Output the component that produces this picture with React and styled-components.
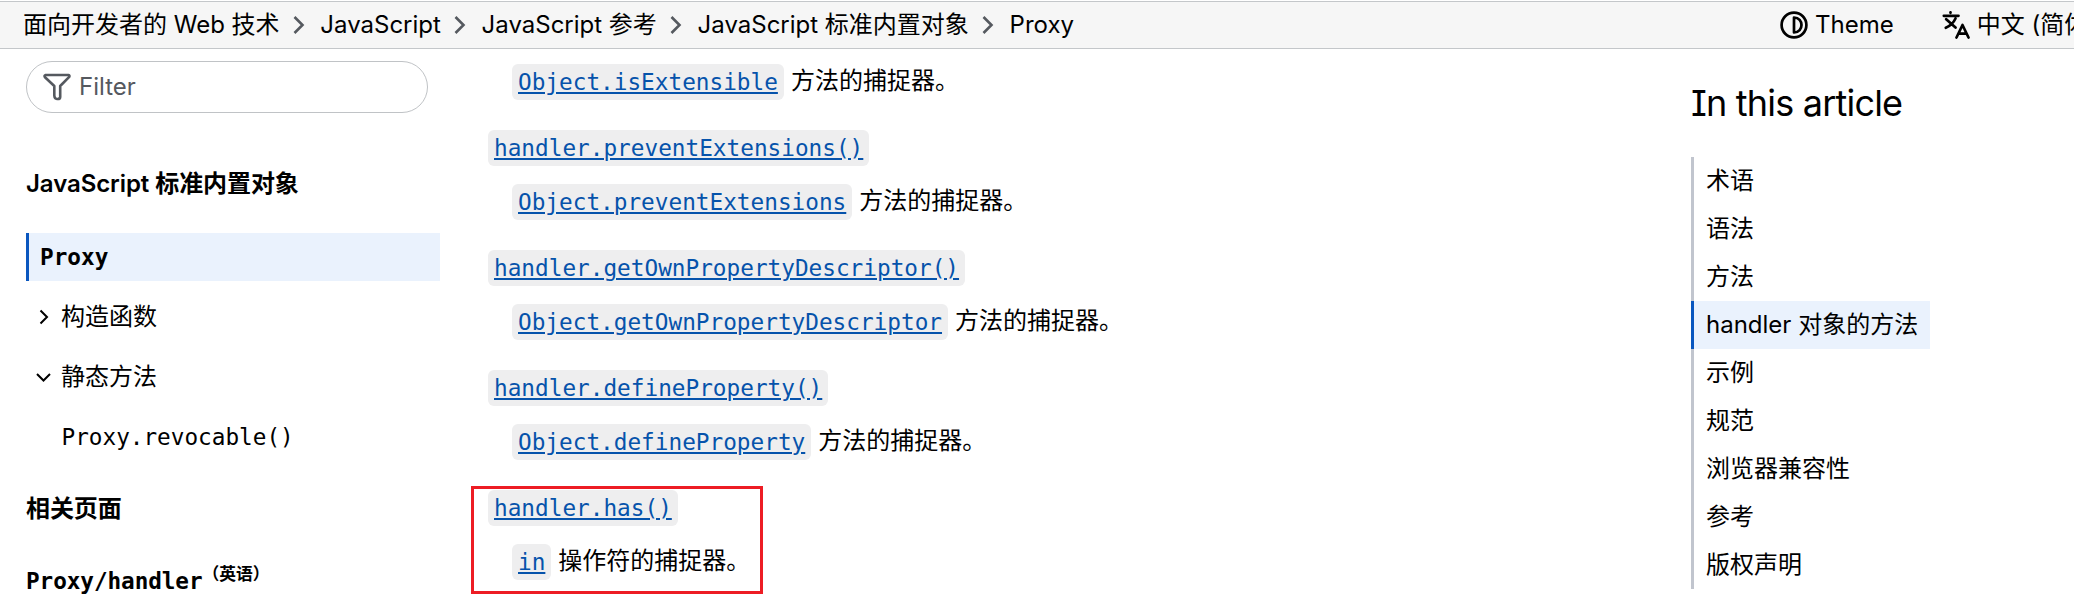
import React from "react";
import styled, { createGlobalStyle, css } from "styled-components";

const sans = `Inter, "Noto Sans CJK SC", sans-serif`;
const mono = `"DejaVu Sans Mono", "Noto Sans CJK SC", monospace`;

const GlobalStyle = createGlobalStyle`
  * { box-sizing: border-box; }
  body {
    margin: 0;
    background: #fff;
    color: #000;
    font: 400 24px/36px ${sans};
  }
  ul, ol, dl, dd, h2 { margin: 0; padding: 0; list-style: none; }
  a { color: inherit; text-decoration: none; }
`;

const Page = styled.div`
  display: flex;
  flex-direction: column;
  height: 601px;
  overflow: hidden;
`;

const TopBar = styled.header`
  display: flex;
  flex: none;
  align-items: center;
  justify-content: space-between;
  height: 48px;
  margin-top: 1px;
  padding-left: 23px;
  background: #f6f6f6;
  border-top: 1px solid #c4c7ca;
  border-bottom: 1px solid #c4c7ca;
  white-space: nowrap;
`;

const Breadcrumbs = styled.ol`
  display: flex;
  align-items: center;
`;

const Crumb = styled.li`
  display: flex;
  align-items: center;
  svg { margin: 0 15.2px 0 13.5px; color: #55595f; }
`;

const Tools = styled.div`
  display: flex;
  flex: none;
  gap: 48px;
  width: 294px;
`;

const Tool = styled.button`
  display: flex;
  flex: none;
  align-items: center;
  gap: 7px;
  padding: 0;
  border: 0;
  background: none;
  color: inherit;
  font: inherit;
`;

const Columns = styled.div`
  display: grid;
  grid-template-columns: 414px 1155px 1fr;
  column-gap: 48px;
  flex: 1;
  min-height: 0;
  padding-left: 26px;
`;

const Sidebar = styled.nav`
  padding-top: 12px;
`;

const FilterBox = styled.label`
  display: flex;
  align-items: center;
  gap: 8px;
  width: 402px;
  height: 52px;
  margin-bottom: 47px;
  padding-left: 16px;
  border: 1px solid #c0c3c6;
  border-radius: 26px;
  color: #55595f;
`;

const SideItem = styled.li`
  display: flex;
  align-items: center;
  height: 48px;
  margin-bottom: ${(p) => p.$gap || 12}px;
  padding-left: ${(p) => p.$indent || 0}px;
  font-weight: ${(p) => (p.$strong ? 600 : 400)};
  letter-spacing: ${(p) => (p.$strong ? "-0.08px" : "normal")};
  white-space: nowrap;
  ${(p) =>
    p.$current &&
    css`
      background: #eaf2fd;
      border-left: 3px solid #0a57bf;
    `}
  svg { margin: 0 8px 0 7px; }
`;

const Mono = styled.code`
  font-family: ${mono};
  font-size: 22.7px;
  font-weight: ${(p) => (p.$bold ? 700 : 400)};
`;

const LocaleNote = styled.sup`
  align-self: flex-start;
  font-size: 16.8px;
  line-height: 35px;
`;

const Article = styled.main`
  position: relative;
  padding-top: 15px;
`;

const Term = styled.dt`
  display: flex;
  height: 36px;
  margin: 30px 0 18px;
`;

const Detail = styled.dd`
  display: flex;
  gap: 7px;
  height: 36px;
  padding-left: 24px;
  white-space: nowrap;
`;

const CodeLink = styled.a`
  display: block;
  height: 36px;
  padding: 0 6px;
  border-radius: 6px;
  background: #eeeeef;
  color: #0653ab;
  font: 400 22.72px/36px ${mono};
  text-decoration: underline 2px;
  text-underline-offset: 2px;
`;

const Text = styled.span`
  line-height: 34px;
`;

const Highlight = styled.div`
  position: absolute;
  top: 437px;
  left: -17px;
  width: 292px;
  height: 108px;
  border: 3px solid #ed1c24;
`;

const Toc = styled.aside`
  padding-top: 31px;
`;

const TocTitle = styled.h2`
  height: 46px;
  margin-bottom: 31px;
  font-size: 36px;
  font-weight: 400;
  line-height: 46px;
  letter-spacing: -0.8px;
  font-feature-settings: "cv08";
  white-space: nowrap;
`;

const TocItem = styled.li`
  width: 239px;
  height: 48px;
  padding-left: 12px;
  border-left: 3px solid ${(p) => (p.$active ? "#0a57bf" : "#c1c5ce")};
  background: ${(p) => (p.$active ? "#eaf2fd" : "transparent")};
  line-height: 47px;
  white-space: nowrap;
`;

const FunnelIcon = () => (
  <svg width="28" height="28" viewBox="0 0 28 28" fill="none" stroke="currentColor" strokeWidth="2.6" strokeLinejoin="round">
    <path d="M2.6 2H25.4Q27.200 2.400 26 4.200L17.200 13V24Q17 26 14.800 26H14Q11.500 25.800 11.300 22.500V13L2 4.200Q0.800 2.500 2.600 2Z" />
  </svg>
);

const ThemeIcon = () => (
  <svg width="28" height="28" viewBox="0 0 28 28" fill="none" stroke="currentColor" strokeWidth="2.7" strokeLinejoin="round">
    <circle cx="14" cy="14" r="12.4" />
    <path d="M14 6.500c10 0 10 15 0 15Z" />
  </svg>
);

const LanguageIcon = () => (
  <svg width="28" height="28" viewBox="0 0 28 28" fill="none" stroke="currentColor" strokeWidth="2.7" strokeLinecap="round" strokeLinejoin="round">
    <path d="M1.800 4.800H16.500M8.500 1.300V1.800M4.200 8.200L13.500 16.500M13.500 7.500Q10.500 14 3.800 16.800M14.500 26.500L20.500 14L26.500 26.500M16.500 22.600H24.500" />
  </svg>
);

const CrumbChevron = () => (
  <svg width="12" height="20" viewBox="0 0 12 20" fill="none" stroke="currentColor" strokeWidth="2.6">
    <path d="M1.500 2L9.500 10L1.500 18" />
  </svg>
);

const Caret = ({ open }) => (
  <svg width="20" height="20" viewBox="0 0 20 20" fill="none" stroke="currentColor" strokeWidth="2">
    <path d={open ? "M4 7L10.500 13.500L17 7" : "M7.500 3.500L14 10L7.500 16.500"} />
  </svg>
);

const crumbs = ["面向开发者的 Web 技术", "JavaScript", "JavaScript 参考", "JavaScript 标准内置对象", "Proxy"];

const traps = [
  [null, "Object.isExtensible", "方法的捕捉器。"],
  ["handler.preventExtensions()", "Object.preventExtensions", "方法的捕捉器。"],
  ["handler.getOwnPropertyDescriptor()", "Object.getOwnPropertyDescriptor", "方法的捕捉器。"],
  ["handler.defineProperty()", "Object.defineProperty", "方法的捕捉器。"],
  ["handler.has()", "in", "操作符的捕捉器。"],
];

const sections = ["术语", "语法", "方法", "handler 对象的方法", "示例", "规范", "浏览器兼容性", "参考", "版权声明"];

export default function App() {
  return (
    <Page>
      <GlobalStyle />
      <TopBar>
        <Breadcrumbs>
          {crumbs.map((c, i) => (
            <Crumb key={c}>
              {i > 0 && <CrumbChevron />}
              <a href="#">{c}</a>
            </Crumb>
          ))}
        </Breadcrumbs>
        <Tools>
          <Tool><ThemeIcon />Theme</Tool>
          <Tool><LanguageIcon />中文 (简体)</Tool>
        </Tools>
      </TopBar>
      <Columns>
        <Sidebar>
          <FilterBox><FunnelIcon />Filter</FilterBox>
          <ul>
            <SideItem $strong $gap={25}>JavaScript 标准内置对象</SideItem>
            <SideItem $current $indent={11}><Mono $bold>Proxy</Mono></SideItem>
            <SideItem><Caret />构造函数</SideItem>
            <SideItem><Caret open />静态方法</SideItem>
            <SideItem $indent={35.5} $gap={24}><Mono>Proxy.revocable()</Mono></SideItem>
            <SideItem $strong $gap={24}>相关页面</SideItem>
            <SideItem $strong><Mono $bold>Proxy/handler</Mono><LocaleNote>（英语）</LocaleNote></SideItem>
          </ul>
        </Sidebar>
        <Article>
          <dl>
            {traps.map(([term, target, text]) => (
              <React.Fragment key={target}>
                {term && <Term><CodeLink href="#">{term}</CodeLink></Term>}
                <Detail><CodeLink href="#">{target}</CodeLink><Text>{text}</Text></Detail>
              </React.Fragment>
            ))}
          </dl>
          <Highlight />
        </Article>
        <Toc>
          <TocTitle>In this article</TocTitle>
          <ul>
            {sections.map((s, i) => (
              <TocItem key={s} $active={i === 3}>{s}</TocItem>
            ))}
          </ul>
        </Toc>
      </Columns>
    </Page>
  );
}
